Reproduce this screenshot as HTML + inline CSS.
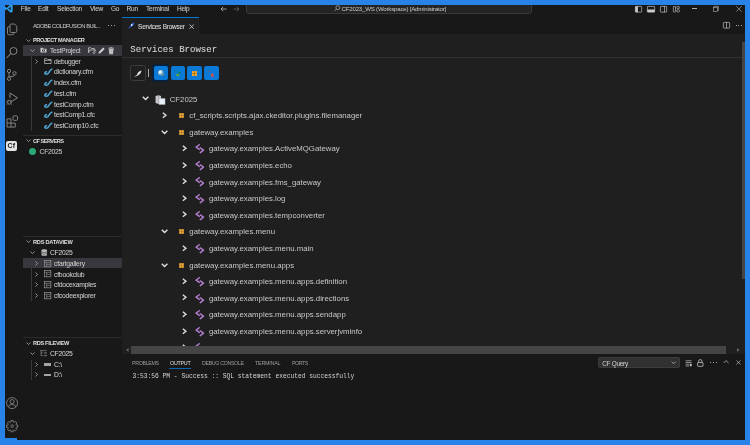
<!DOCTYPE html>
<html><head><meta charset="utf-8"><title>VS Code - Services Browser</title>
<style>
html,body{margin:0;padding:0;width:750px;height:445px;overflow:hidden;background:#2883e8;}
#w{position:absolute;left:0;top:0;width:750px;height:445px;overflow:hidden;will-change:transform;background:#181818;font-family:"Liberation Sans",sans-serif;}
.t{position:absolute;white-space:nowrap;-webkit-text-stroke:0.2px currentColor;}
.r{position:absolute;}
.s{position:absolute;overflow:visible;}
</style></head><body>
<div id="w">
<div class="r" style="left:0.00px;top:0.00px;width:750.00px;height:17.10px;background:#181818;"></div>
<div class="r" style="left:0.00px;top:16.60px;width:750.00px;height:0.50px;background:#2b2b2b;"></div>
<svg class="s" style="left:4.00px;top:4.00px;" width="9" height="9" viewBox="0 0 100 100"><path d="M74 4 L96 14 V86 L74 96 L30 56 L12 70 L4 66 V34 L12 30 L30 44 Z M74 28 L48 50 L74 72 Z" fill="#2aa2f0"/></svg>
<div class="t" style="left:20.80px;top:5.25px;font-size:6.527px;line-height:7.51px;color:#cccccc;letter-spacing:-0.172px;-webkit-text-stroke:0.05px currentColor;">File</div>
<div class="t" style="left:38.00px;top:5.25px;font-size:6.527px;line-height:7.51px;color:#cccccc;letter-spacing:-0.184px;-webkit-text-stroke:0.05px currentColor;">Edit</div>
<div class="t" style="left:57.00px;top:5.25px;font-size:6.527px;line-height:7.51px;color:#cccccc;letter-spacing:-0.195px;-webkit-text-stroke:0.05px currentColor;">Selection</div>
<div class="t" style="left:90.00px;top:5.25px;font-size:6.527px;line-height:7.51px;color:#cccccc;letter-spacing:-0.229px;-webkit-text-stroke:0.05px currentColor;">View</div>
<div class="t" style="left:111.00px;top:5.25px;font-size:6.527px;line-height:7.51px;color:#cccccc;letter-spacing:-0.285px;-webkit-text-stroke:0.05px currentColor;">Go</div>
<div class="t" style="left:126.60px;top:5.25px;font-size:6.527px;line-height:7.51px;color:#cccccc;letter-spacing:-0.261px;-webkit-text-stroke:0.05px currentColor;">Run</div>
<div class="t" style="left:146.00px;top:5.25px;font-size:6.527px;line-height:7.51px;color:#cccccc;letter-spacing:-0.202px;-webkit-text-stroke:0.05px currentColor;">Terminal</div>
<div class="t" style="left:177.00px;top:5.25px;font-size:6.527px;line-height:7.51px;color:#cccccc;letter-spacing:-0.220px;-webkit-text-stroke:0.05px currentColor;">Help</div>
<svg class="s" style="left:219.50px;top:5.50px;" width="7" height="6" viewBox="0 0 14 12"><path d="M13 6H2M6.5 1.5L2 6l4.5 4.5" stroke="#cccccc" stroke-width="1.4" fill="none"/></svg>
<svg class="s" style="left:232.50px;top:5.50px;" width="7" height="6" viewBox="0 0 14 12"><path d="M1 6h11M7.5 1.5L12 6l-4.5 4.5" stroke="#6f6f6f" stroke-width="1.4" fill="none"/></svg>
<div class="r" style="left:246.20px;top:3.20px;width:286.30px;height:10.80px;background:#242424;border:0.5px solid #3a3a3a;border-radius:3px;box-sizing:border-box;"></div>
<svg class="s" style="left:333.60px;top:5.20px;" width="6.5" height="6.5" viewBox="0 0 16 16"><circle cx="9.5" cy="6.5" r="4.8" stroke="#cccccc" stroke-width="1.5" fill="none"/><path d="M6 10L1.5 14.5" stroke="#cccccc" stroke-width="1.6"/></svg>
<div class="t" style="left:341.60px;top:5.40px;font-size:6.088px;line-height:7.00px;color:#cccccc;letter-spacing:-0.198px;-webkit-text-stroke:0px currentColor;">CF2023_WS (Workspace) [Administrator]</div>
<svg class="s" style="left:634.70px;top:5.70px;" width="7" height="6.5" viewBox="0 0 14 13"><rect x="0.75" y="0.75" width="12.5" height="11.5" rx="1" stroke="#cccccc" stroke-width="1.3" fill="none"/><rect x="0.75" y="0.75" width="5" height="11.5" fill="#cccccc"/></svg>
<svg class="s" style="left:646.70px;top:5.70px;" width="8" height="6.5" viewBox="0 0 16 13"><rect x="0.75" y="0.75" width="14.5" height="11.5" rx="1" stroke="#cccccc" stroke-width="1.3" fill="none"/><rect x="0.75" y="7" width="14.5" height="5.25" fill="#cccccc"/></svg>
<svg class="s" style="left:660.00px;top:5.70px;" width="7" height="6.5" viewBox="0 0 14 13"><rect x="0.75" y="0.75" width="12.5" height="11.5" rx="1" stroke="#cccccc" stroke-width="1.3" fill="none"/><path d="M9 1v11" stroke="#cccccc" stroke-width="1.3"/></svg>
<svg class="s" style="left:673.30px;top:5.70px;" width="6.7" height="6.5" viewBox="0 0 14 13"><rect x="0.75" y="0.75" width="4.5" height="11.5" rx="1" stroke="#cccccc" stroke-width="1.3" fill="none"/><rect x="8" y="0.75" width="5.25" height="4.5" rx="1" stroke="#cccccc" stroke-width="1.3" fill="none"/><rect x="8" y="7.75" width="5.25" height="4.5" rx="1" stroke="#cccccc" stroke-width="1.3" fill="none"/></svg>
<div class="r" style="left:692.00px;top:8.20px;width:5.20px;height:0.50px;background:#b0b0b0;"></div>
<svg class="s" style="left:713.30px;top:5.80px;" width="5.7" height="5.7" viewBox="0 0 12 12"><rect x="0.6" y="2.6" width="8.8" height="8.8" stroke="#cccccc" stroke-width="1.1" fill="none"/><path d="M2.6 2.6V0.6h8.8v8.8h-2" stroke="#cccccc" stroke-width="1.1" fill="none"/></svg>
<svg class="s" style="left:735.80px;top:5.60px;" width="5.9" height="5.9" viewBox="0 0 12 12"><path d="M0.5 0.5L11.5 11.5M11.5 0.5L0.5 11.5" stroke="#cccccc" stroke-width="1.1"/></svg>
<div class="r" style="left:0.00px;top:17.10px;width:23.40px;height:430.00px;background:#181818;"></div>
<div class="r" style="left:22.60px;top:17.10px;width:0.90px;height:430.00px;background:#262626;"></div>
<svg class="s" style="left:5.50px;top:22.50px;" width="12" height="12.5" viewBox="0 0 24 25"><path d="M8 4.5 Q8 2 10.5 2 H17 L21.5 6.5 V16.5 Q21.5 19 19 19 H10.5 Q8 19 8 16.5 Z" stroke="#8b8b8b" stroke-width="1.8" fill="none"/><path d="M8 7.5 H5.5 Q3 7.5 3 10 V21 Q3 23.5 5.5 23.5 H13 Q15.5 23.5 15.5 21 V19" stroke="#8b8b8b" stroke-width="1.8" fill="none"/></svg>
<svg class="s" style="left:5.50px;top:45.50px;" width="12.5" height="12.5" viewBox="0 0 25 25"><circle cx="15" cy="10" r="7" stroke="#8b8b8b" stroke-width="1.9" fill="none"/><path d="M10 15 L2 23" stroke="#8b8b8b" stroke-width="2.1" stroke-linecap="round"/></svg>
<svg class="s" style="left:6.00px;top:68.30px;" width="11.5" height="13.5" viewBox="0 0 23 27"><circle cx="6" cy="6" r="3.3" stroke="#8b8b8b" stroke-width="1.8" fill="none"/><circle cx="6" cy="21.5" r="3.3" stroke="#8b8b8b" stroke-width="1.8" fill="none"/><circle cx="17" cy="10.5" r="3.3" stroke="#8b8b8b" stroke-width="1.8" fill="none"/><path d="M6 9.3 V18.2 M17 13.8 Q17 17 12 17 Q6.5 17 6.5 18.5" stroke="#8b8b8b" stroke-width="1.8" fill="none"/></svg>
<svg class="s" style="left:5.50px;top:92.00px;" width="12.5" height="13.5" viewBox="0 0 25 27"><path d="M8 2 L23 11.5 L11 19" stroke="#8b8b8b" stroke-width="1.9" fill="none" stroke-linejoin="round"/><path d="M8 2 V12" stroke="#8b8b8b" stroke-width="1.9"/><ellipse cx="6.5" cy="20.5" rx="3.3" ry="4" stroke="#8b8b8b" stroke-width="1.8" fill="none"/><path d="M1 17.5h2M1 21h2M1 24.5h2M10 17.5h2M10 21h2M10 24.5h2" stroke="#8b8b8b" stroke-width="1.4"/></svg>
<svg class="s" style="left:5.50px;top:115.30px;" width="12.5" height="13.2" viewBox="0 0 25 26"><path d="M2 7.5 H10 V16 H18.5 V24 H2 Z M10 16 H2 M10 16 V24" stroke="#8b8b8b" stroke-width="1.8" fill="none" stroke-linejoin="round"/><rect x="14" y="1.5" width="9" height="9" rx="2" stroke="#8b8b8b" stroke-width="1.8" fill="none"/></svg>
<div class="r" style="left:6.10px;top:140.50px;width:11.10px;height:10.40px;background:#e4e4e4;border-radius:2px;"></div>
<div class="t" style="left:7.60px;top:141.88px;font-size:7.0px;line-height:8.05px;color:#1a1a1a;font-weight:bold;-webkit-text-stroke:0px currentColor;">Cf</div>
<svg class="s" style="left:5.80px;top:397.00px;" width="12.2" height="12.2" viewBox="0 0 24 24"><circle cx="12" cy="12" r="10.8" stroke="#8b8b8b" stroke-width="1.6" fill="none"/><circle cx="12" cy="9" r="4" stroke="#8b8b8b" stroke-width="1.6" fill="none"/><path d="M4.5 19.5 Q6 14.5 12 14.5 Q18 14.5 19.5 19.5" stroke="#8b8b8b" stroke-width="1.6" fill="none"/></svg>
<svg class="s" style="left:5.80px;top:420.20px;" width="12.3" height="12.3" viewBox="0 0 24 24"><path d="M9.61 3.95 L9.68 3.93 L9.86 1.01 L14.14 1.01 L14.32 3.93 L16.01 4.62 L16.07 4.65 L18.26 2.71 L21.29 5.74 L19.35 7.93 L20.05 9.61 L20.07 9.68 L22.99 9.86 L22.99 14.14 L20.07 14.32 L19.38 16.01 L19.35 16.07 L21.29 18.26 L18.26 21.29 L16.07 19.35 L14.39 20.05 L14.32 20.07 L14.14 22.99 L9.86 22.99 L9.68 20.07 L7.99 19.38 L7.93 19.35 L5.74 21.29 L2.71 18.26 L4.65 16.07 L3.95 14.39 L3.93 14.32 L1.01 14.14 L1.01 9.86 L3.93 9.68 L4.62 7.99 L4.65 7.93 L2.71 5.74 L5.74 2.71 L7.93 4.65Z" stroke="#8b8b8b" stroke-width="1.6" fill="none" stroke-linejoin="round"/><circle cx="12" cy="12" r="2.6" stroke="#8b8b8b" stroke-width="1.5" fill="none"/></svg>
<div class="r" style="left:23.40px;top:17.10px;width:98.60px;height:430.00px;background:#181818;"></div>
<div class="r" style="left:121.90px;top:17.10px;width:0.80px;height:430.00px;background:#2b2b2b;"></div>
<div class="t" style="left:33.00px;top:22.99px;font-size:5.75px;line-height:6.61px;color:#cccccc;letter-spacing:-0.463px;-webkit-text-stroke:0px currentColor;">ADOBE COLDFUSION BUIL...</div>
<div class="r" style="left:108.30px;top:24.90px;width:1.20px;height:1.20px;background:#cccccc;border-radius:50%;"></div>
<div class="r" style="left:110.90px;top:24.90px;width:1.20px;height:1.20px;background:#cccccc;border-radius:50%;"></div>
<div class="r" style="left:113.50px;top:24.90px;width:1.20px;height:1.20px;background:#cccccc;border-radius:50%;"></div>
<div class="r" style="left:23.40px;top:45.00px;width:98.60px;height:10.50px;background:#37373d;"></div>
<svg class="s" style="left:26.00px;top:38.50px;" width="5" height="3" viewBox="0 0 10 6"><path d="M1 1l4 4 4-4" stroke="#cccccc" stroke-width="1.3" fill="none"/></svg>
<div class="t" style="left:33.00px;top:37.28px;font-size:5.6px;line-height:6.44px;color:#d8d8d8;font-weight:bold;letter-spacing:-0.363px;-webkit-text-stroke:0.05px currentColor;">PROJECT MANAGER</div>
<svg class="s" style="left:30.00px;top:48.80px;" width="5" height="3" viewBox="0 0 10 6"><path d="M1 1l4 4 4-4" stroke="#cccccc" stroke-width="1.3" fill="none"/></svg>
<svg class="s" style="left:40.00px;top:46.80px;" width="7" height="6" viewBox="0 0 14 12"><path d="M1 2V11H13V3.5H7L5.5 1.5H1Z" fill="#cccccc"/><rect x="4" y="5" width="6" height="4" fill="#37373d"/><rect x="6" y="6" width="2" height="2" fill="#cccccc"/></svg>
<div class="t" style="left:50.00px;top:46.70px;font-size:6.602px;line-height:7.59px;color:#cccccc;letter-spacing:-0.194px;-webkit-text-stroke:0.05px currentColor;">TestProject</div>
<svg class="s" style="left:87.90px;top:47.20px;" width="8.1" height="7" viewBox="0 0 16 14"><path d="M1 11.5V1.5H5.5L7 3H12.5V6" stroke="#c8c8c8" stroke-width="1.6" fill="none"/><path d="M1 11.5L3.5 6H15L13 10" stroke="#c8c8c8" stroke-width="1.6" fill="none"/><circle cx="12" cy="11.5" r="1.8" stroke="#c8c8c8" stroke-width="1.2" fill="none"/></svg>
<svg class="s" style="left:97.80px;top:46.90px;" width="7.3" height="7.1" viewBox="0 0 14 14"><path d="M2.5 11.5L11.5 2.5" stroke="#d0d0d0" stroke-width="4" stroke-linecap="butt"/><path d="M0.5 13.5L1.2 10.5L3.5 12.8Z" fill="#d0d0d0"/></svg>
<svg class="s" style="left:108.00px;top:46.70px;" width="6.3" height="7.3" viewBox="0 0 12 14"><path d="M0.5 1.5H11.5V3H0.5Z M4 0.3H8V1.5H4Z" fill="#c8c8c8"/><path d="M1.3 3.5L2.4 13.7H9.6L10.7 3.5Z" fill="#bdbdbd"/></svg>
<div class="r" style="left:31.00px;top:56.00px;width:1.00px;height:74.80px;background:#393939;"></div>
<svg class="s" style="left:35.20px;top:58.80px;" width="3" height="5" viewBox="0 0 6 10"><path d="M1 1l4 4-4 4" stroke="#cccccc" stroke-width="1.3" fill="none"/></svg>
<svg class="s" style="left:43.60px;top:58.00px;" width="7.7" height="6" viewBox="0 0 15 12"><path d="M1 1.5H6L7.5 3H14V11H1Z" stroke="#cccccc" stroke-width="1.4" fill="none"/><path d="M1 5H14" stroke="#cccccc" stroke-width="1.2"/></svg>
<div class="t" style="left:54.00px;top:57.72px;font-size:6.741px;line-height:7.75px;color:#cccccc;letter-spacing:-0.233px;-webkit-text-stroke:0.05px currentColor;">debugger</div>
<svg class="s" style="left:42.00px;top:67.30px;" width="12" height="10" viewBox="0 0 12 10"><path d="M9.9 2.2 Q7.9 3.4 6.9 5.3 Q5.9 7.2 4.2 7.2 Q2.6 7.1 2.8 6 Q3.1 5.1 4.5 4.8" stroke="#4fa3cf" stroke-width="1.5" fill="none" stroke-linecap="round"/></svg>
<div class="t" style="left:54.00px;top:68.46px;font-size:6.848px;line-height:7.88px;color:#cccccc;letter-spacing:-0.195px;-webkit-text-stroke:0.05px currentColor;">dictionary.cfm</div>
<svg class="s" style="left:42.00px;top:78.00px;" width="12" height="10" viewBox="0 0 12 10"><path d="M9.9 2.2 Q7.9 3.4 6.9 5.3 Q5.9 7.2 4.2 7.2 Q2.6 7.1 2.8 6 Q3.1 5.1 4.5 4.8" stroke="#4fa3cf" stroke-width="1.5" fill="none" stroke-linecap="round"/></svg>
<div class="t" style="left:54.00px;top:79.16px;font-size:6.848px;line-height:7.88px;color:#cccccc;letter-spacing:-0.213px;-webkit-text-stroke:0.05px currentColor;">index.cfm</div>
<svg class="s" style="left:42.00px;top:88.70px;" width="12" height="10" viewBox="0 0 12 10"><path d="M9.9 2.2 Q7.9 3.4 6.9 5.3 Q5.9 7.2 4.2 7.2 Q2.6 7.1 2.8 6 Q3.1 5.1 4.5 4.8" stroke="#4fa3cf" stroke-width="1.5" fill="none" stroke-linecap="round"/></svg>
<div class="t" style="left:54.00px;top:89.86px;font-size:6.848px;line-height:7.88px;color:#cccccc;letter-spacing:-0.196px;-webkit-text-stroke:0.05px currentColor;">test.cfm</div>
<svg class="s" style="left:42.00px;top:99.50px;" width="12" height="10" viewBox="0 0 12 10"><path d="M9.9 2.2 Q7.9 3.4 6.9 5.3 Q5.9 7.2 4.2 7.2 Q2.6 7.1 2.8 6 Q3.1 5.1 4.5 4.8" stroke="#4fa3cf" stroke-width="1.5" fill="none" stroke-linecap="round"/></svg>
<div class="t" style="left:54.00px;top:100.66px;font-size:6.848px;line-height:7.88px;color:#cccccc;letter-spacing:-0.230px;-webkit-text-stroke:0.05px currentColor;">testComp.cfm</div>
<svg class="s" style="left:42.00px;top:110.20px;" width="12" height="10" viewBox="0 0 12 10"><path d="M9.9 2.2 Q7.9 3.4 6.9 5.3 Q5.9 7.2 4.2 7.2 Q2.6 7.1 2.8 6 Q3.1 5.1 4.5 4.8" stroke="#4fa3cf" stroke-width="1.5" fill="none" stroke-linecap="round"/></svg>
<div class="t" style="left:54.00px;top:111.36px;font-size:6.848px;line-height:7.88px;color:#cccccc;letter-spacing:-0.220px;-webkit-text-stroke:0.05px currentColor;">testComp1.cfc</div>
<svg class="s" style="left:42.00px;top:121.00px;" width="12" height="10" viewBox="0 0 12 10"><path d="M9.9 2.2 Q7.9 3.4 6.9 5.3 Q5.9 7.2 4.2 7.2 Q2.6 7.1 2.8 6 Q3.1 5.1 4.5 4.8" stroke="#4fa3cf" stroke-width="1.5" fill="none" stroke-linecap="round"/></svg>
<div class="t" style="left:54.00px;top:122.16px;font-size:6.848px;line-height:7.88px;color:#cccccc;letter-spacing:-0.222px;-webkit-text-stroke:0.05px currentColor;">testComp10.cfc</div>
<div class="r" style="left:23.40px;top:135.00px;width:98.60px;height:0.50px;background:#2b2b2b;"></div>
<svg class="s" style="left:26.00px;top:139.10px;" width="5" height="3" viewBox="0 0 10 6"><path d="M1 1l4 4 4-4" stroke="#cccccc" stroke-width="1.3" fill="none"/></svg>
<div class="t" style="left:33.00px;top:137.88px;font-size:5.6px;line-height:6.44px;color:#d8d8d8;font-weight:bold;letter-spacing:-0.519px;-webkit-text-stroke:0.05px currentColor;">CF SERVERS</div>
<div class="r" style="left:29px;top:147.6px;width:7.2px;height:7.2px;border-radius:50%;background:#2aa876;"></div>
<div class="t" style="left:39.60px;top:148.32px;font-size:6.741px;line-height:7.75px;color:#cccccc;letter-spacing:-0.261px;-webkit-text-stroke:0.05px currentColor;">CF2025</div>
<div class="r" style="left:23.40px;top:236.40px;width:98.60px;height:0.50px;background:#2b2b2b;"></div>
<svg class="s" style="left:26.00px;top:240.30px;" width="5" height="3" viewBox="0 0 10 6"><path d="M1 1l4 4 4-4" stroke="#cccccc" stroke-width="1.3" fill="none"/></svg>
<div class="t" style="left:33.00px;top:239.08px;font-size:5.6px;line-height:6.44px;color:#d8d8d8;font-weight:bold;letter-spacing:-0.208px;-webkit-text-stroke:0.05px currentColor;">RDS DATAVIEW</div>
<svg class="s" style="left:30.00px;top:250.90px;" width="5" height="3" viewBox="0 0 10 6"><path d="M1 1l4 4 4-4" stroke="#cccccc" stroke-width="1.3" fill="none"/></svg>
<svg class="s" style="left:40.50px;top:248.50px;" width="6.5" height="7.5" viewBox="0 0 12 14"><ellipse cx="6" cy="2.5" rx="5.2" ry="2" fill="#bdbdbd"/><path d="M0.8 2.5V11.5Q6 14 11.2 11.5V2.5" fill="#bdbdbd"/><path d="M0.8 5.5Q6 7.5 11.2 5.5M0.8 8.5Q6 10.5 11.2 8.5" stroke="#181818" stroke-width="0.9" fill="none"/></svg>
<div class="t" style="left:50.00px;top:248.52px;font-size:6.741px;line-height:7.75px;color:#cccccc;letter-spacing:-0.261px;-webkit-text-stroke:0.05px currentColor;">CF2025</div>
<div class="r" style="left:23.40px;top:258.30px;width:98.60px;height:10.20px;background:#37373d;"></div>
<div class="r" style="left:31.00px;top:258.50px;width:1.00px;height:42.50px;background:#393939;"></div>
<svg class="s" style="left:35.20px;top:260.80px;" width="3" height="5" viewBox="0 0 6 10"><path d="M1 1l4 4-4 4" stroke="#cccccc" stroke-width="1.3" fill="none"/></svg>
<svg class="s" style="left:43.80px;top:259.70px;" width="7.3" height="7.2" viewBox="0 0 14 14"><rect x="0.7" y="0.7" width="12.6" height="12.6" stroke="#9a9a9a" stroke-width="1.3" fill="none"/><path d="M0.7 4.5H13.3M5 4.5V13.3M5 8.5H13.3" stroke="#9a9a9a" stroke-width="1.1"/></svg>
<div class="t" style="left:54.00px;top:259.99px;font-size:6.795px;line-height:7.81px;color:#cccccc;letter-spacing:-0.181px;-webkit-text-stroke:0.05px currentColor;">cfartgallery</div>
<svg class="s" style="left:35.20px;top:271.50px;" width="3" height="5" viewBox="0 0 6 10"><path d="M1 1l4 4-4 4" stroke="#cccccc" stroke-width="1.3" fill="none"/></svg>
<svg class="s" style="left:43.80px;top:270.40px;" width="7.3" height="7.2" viewBox="0 0 14 14"><rect x="0.7" y="0.7" width="12.6" height="12.6" stroke="#9a9a9a" stroke-width="1.3" fill="none"/><path d="M0.7 4.5H13.3M5 4.5V13.3M5 8.5H13.3" stroke="#9a9a9a" stroke-width="1.1"/></svg>
<div class="t" style="left:54.00px;top:270.69px;font-size:6.795px;line-height:7.81px;color:#cccccc;letter-spacing:-0.213px;-webkit-text-stroke:0.05px currentColor;">cfbookclub</div>
<svg class="s" style="left:35.20px;top:282.20px;" width="3" height="5" viewBox="0 0 6 10"><path d="M1 1l4 4-4 4" stroke="#cccccc" stroke-width="1.3" fill="none"/></svg>
<svg class="s" style="left:43.80px;top:281.10px;" width="7.3" height="7.2" viewBox="0 0 14 14"><rect x="0.7" y="0.7" width="12.6" height="12.6" stroke="#9a9a9a" stroke-width="1.3" fill="none"/><path d="M0.7 4.5H13.3M5 4.5V13.3M5 8.5H13.3" stroke="#9a9a9a" stroke-width="1.1"/></svg>
<div class="t" style="left:54.00px;top:281.39px;font-size:6.795px;line-height:7.81px;color:#cccccc;letter-spacing:-0.228px;-webkit-text-stroke:0.05px currentColor;">cfdocexamples</div>
<svg class="s" style="left:35.20px;top:292.90px;" width="3" height="5" viewBox="0 0 6 10"><path d="M1 1l4 4-4 4" stroke="#cccccc" stroke-width="1.3" fill="none"/></svg>
<svg class="s" style="left:43.80px;top:291.80px;" width="7.3" height="7.2" viewBox="0 0 14 14"><rect x="0.7" y="0.7" width="12.6" height="12.6" stroke="#9a9a9a" stroke-width="1.3" fill="none"/><path d="M0.7 4.5H13.3M5 4.5V13.3M5 8.5H13.3" stroke="#9a9a9a" stroke-width="1.1"/></svg>
<div class="t" style="left:54.00px;top:292.09px;font-size:6.795px;line-height:7.81px;color:#cccccc;letter-spacing:-0.208px;-webkit-text-stroke:0.05px currentColor;">cfcodeexplorer</div>
<div class="r" style="left:23.40px;top:337.40px;width:98.60px;height:0.50px;background:#2b2b2b;"></div>
<svg class="s" style="left:26.00px;top:341.50px;" width="5" height="3" viewBox="0 0 10 6"><path d="M1 1l4 4 4-4" stroke="#cccccc" stroke-width="1.3" fill="none"/></svg>
<div class="t" style="left:33.00px;top:340.28px;font-size:5.6px;line-height:6.44px;color:#d8d8d8;font-weight:bold;letter-spacing:-0.319px;-webkit-text-stroke:0.05px currentColor;">RDS FILEVIEW</div>
<svg class="s" style="left:30.00px;top:352.10px;" width="5" height="3" viewBox="0 0 10 6"><path d="M1 1l4 4 4-4" stroke="#cccccc" stroke-width="1.3" fill="none"/></svg>
<svg class="s" style="left:40.20px;top:350.10px;" width="6.8" height="6.4" viewBox="0 0 13 12"><path d="M0.5 1H12.5M2 1V11M2 5.5H5M2 10.5H5M7 5.5H12.5M7 10.5H12.5M11.5 4V7M11.5 9V12" stroke="#a0a0a0" stroke-width="1.1" fill="none"/></svg>
<div class="t" style="left:50.00px;top:349.72px;font-size:6.741px;line-height:7.75px;color:#cccccc;letter-spacing:-0.261px;-webkit-text-stroke:0.05px currentColor;">CF2025</div>
<div class="r" style="left:31.00px;top:359.50px;width:1.00px;height:20.00px;background:#393939;"></div>
<svg class="s" style="left:35.20px;top:362.00px;" width="3" height="5" viewBox="0 0 6 10"><path d="M1 1l4 4-4 4" stroke="#cccccc" stroke-width="1.3" fill="none"/></svg>
<div class="r" style="left:43.80px;top:363.40px;width:7.50px;height:2.20px;background:#a4a4a4;"></div>
<div class="t" style="left:54.00px;top:360.62px;font-size:6.741px;line-height:7.75px;color:#cccccc;letter-spacing:-0.188px;-webkit-text-stroke:0.05px currentColor;">C:\</div>
<svg class="s" style="left:35.20px;top:372.40px;" width="3" height="5" viewBox="0 0 6 10"><path d="M1 1l4 4-4 4" stroke="#cccccc" stroke-width="1.3" fill="none"/></svg>
<div class="r" style="left:43.80px;top:373.80px;width:7.50px;height:2.20px;background:#a4a4a4;"></div>
<div class="t" style="left:54.00px;top:371.02px;font-size:6.741px;line-height:7.75px;color:#cccccc;letter-spacing:-0.188px;-webkit-text-stroke:0.05px currentColor;">D:\</div>
<div class="r" style="left:122.30px;top:17.10px;width:622.70px;height:17.10px;background:#181818;"></div>
<div class="r" style="left:122.30px;top:17.10px;width:76.30px;height:17.10px;background:#1f1f1f;"></div>
<div class="r" style="left:198.50px;top:33.50px;width:546.50px;height:1.00px;background:#272727;"></div>
<div class="r" style="left:198.10px;top:17.10px;width:1.00px;height:17.00px;background:#272727;"></div>
<div class="r" style="left:122.30px;top:16.60px;width:76.30px;height:1.20px;background:#0078d4;"></div>
<svg class="s" style="left:127.20px;top:21.80px;" width="8" height="7.2" viewBox="0 0 16 14"><path d="M0.5 13.5 C2.5 11.5 4.5 10 6.5 8.5 C7 5.5 9 2 15 0.5 C14.5 4 12.5 8 8.5 10 C6 11.5 3 13 0.5 13.5 Z" fill="#2a62d4"/><ellipse cx="9.5" cy="6" rx="1.8" ry="2" fill="#dfe8ff"/></svg>
<div class="t" style="left:138.10px;top:22.69px;font-size:6.45px;line-height:7.42px;color:#d8d8d8;letter-spacing:-0.211px;-webkit-text-stroke:0.1px currentColor;">Services Browser</div>
<svg class="s" style="left:188.80px;top:23.50px;" width="5.3" height="5.3" viewBox="0 0 10 10"><path d="M1 1L9 9M9 1L1 9" stroke="#dddddd" stroke-width="1.5"/></svg>
<svg class="s" style="left:722.60px;top:21.80px;" width="7" height="6.5" viewBox="0 0 14 13"><rect x="0.75" y="0.75" width="12.5" height="11.5" rx="1.5" stroke="#cccccc" stroke-width="1.3" fill="none"/><path d="M7 1v11" stroke="#cccccc" stroke-width="1.3"/></svg>
<div class="r" style="left:735.50px;top:24.60px;width:1.00px;height:1.00px;background:#cccccc;border-radius:50%;"></div>
<div class="r" style="left:738.10px;top:24.60px;width:1.00px;height:1.00px;background:#cccccc;border-radius:50%;"></div>
<div class="r" style="left:740.70px;top:24.60px;width:1.00px;height:1.00px;background:#cccccc;border-radius:50%;"></div>
<div class="r" style="left:122.30px;top:34.20px;width:622.70px;height:320.00px;background:#1f1f1f;"></div>
<div class="t" style="left:130.30px;top:44.55px;font-size:9.05px;line-height:10.41px;color:#d0d0d0;font-family:'Liberation Mono',monospace;-webkit-text-stroke:0.1px currentColor;">Services Browser</div>
<div class="r" style="left:122.30px;top:57.30px;width:620.00px;height:0.60px;background:#333333;"></div>
<div class="r" style="left:129.9px;top:65px;width:15.8px;height:15.8px;border:1px solid #3c3c3c;border-radius:2.5px;box-sizing:border-box;background:#1f1f1f;"></div>
<svg class="s" style="left:133.60px;top:69.60px;" width="8" height="7.4" viewBox="0 0 16 14"><path d="M0.5 13.5 C2.5 11.5 4.5 10 6.5 8.5 C7 5.5 9 2 15 0.5 C14.5 4 12.5 8 8.5 10 C6 11.5 3 13 0.5 13.5 Z" fill="#e6e6e6"/></svg>
<div class="r" style="left:147.90px;top:69.00px;width:1.10px;height:8.20px;background:#a8a8a8;"></div>
<div class="r" style="left:152.2px;top:64.3px;width:17.2px;height:17.6px;border-radius:3px;background:#07203c;"></div>
<div class="r" style="left:153.80px;top:65.90px;width:14.40px;height:14.30px;background:#0a7ad6;border-radius:2px;"></div>
<div class="r" style="left:170.90px;top:65.90px;width:14.40px;height:14.30px;background:#0a7ad6;border-radius:2px;"></div>
<div class="r" style="left:187.40px;top:65.90px;width:14.40px;height:14.30px;background:#0a7ad6;border-radius:2px;"></div>
<div class="r" style="left:204.20px;top:65.90px;width:14.40px;height:14.30px;background:#0a7ad6;border-radius:2px;"></div>
<svg class="s" style="left:157.90px;top:70.20px;" width="6.2" height="6.2" viewBox="0 0 12 12"><defs><radialGradient id="gl" cx="0.32" cy="0.3" r="0.75"><stop offset="0" stop-color="#ffffff"/><stop offset="0.3" stop-color="#dfe8e0"/><stop offset="0.6" stop-color="#62a8dc"/><stop offset="1" stop-color="#3a7cc0"/></radialGradient></defs><circle cx="6" cy="6" r="5.8" fill="url(#gl)"/><path d="M6 11.8 C8 11 9 9.5 8.5 8 C10 8 11 7 11.6 6.5 C11.5 9.5 9 11.8 6 11.8Z" fill="#a8a040"/></svg>
<svg class="s" style="left:173.80px;top:69.60px;" width="8" height="7.2" viewBox="0 0 16 14"><path d="M1 2.5h2.5M1 4.5h1.5M5 1v3" stroke="#0f8a6a" stroke-width="1.1"/><ellipse cx="7.5" cy="10" rx="3.3" ry="2.8" fill="#5aa848"/><path d="M8 6.5 C9 4 11 3.5 14 3 C13.5 6 12 7.5 9.5 8" fill="#108050"/></svg>
<svg class="s" style="left:191.80px;top:70.90px;" width="5" height="5.1" viewBox="0 0 10 10"><rect x="0" y="0" width="10" height="10" rx="1" fill="#f2a82a"/><path d="M5 0V10M0 5H10" stroke="#8a5a10" stroke-width="1"/></svg>
<svg class="s" style="left:207.60px;top:69.60px;" width="6.6" height="6.8" viewBox="0 0 13 13"><path d="M1 1.5v2.5M4 1v3" stroke="#b04848" stroke-width="1.1"/><path d="M7.5 6 L9.5 6 L12 12.5 H5 Z" fill="#f04a3a"/></svg>
<svg class="s" style="left:141.60px;top:96.20px;" width="7.2" height="4.8" viewBox="0 0 12 8"><path d="M1.3 1.3 L6 6 L10.7 1.3" stroke="#e0e0e0" stroke-width="2.3" fill="none"/></svg>
<svg class="s" style="left:155.20px;top:94.50px;" width="10.6" height="10" viewBox="0 0 21 20"><path d="M1 2 L7 0.5 L12 2 V16 L7 18 L1 16 Z" fill="#c8c8c8"/><path d="M7 0.5 V18" stroke="#8a8a8a" stroke-width="1"/><rect x="8" y="7" width="12" height="12" fill="#e8eef8"/><path d="M8 7 H20 V19 H8 Z" stroke="#b0b8c8" stroke-width="0.8" fill="none"/></svg>
<div class="t" style="left:169.70px;top:95.21px;font-size:7.81px;line-height:8.98px;color:#c8c8c8;-webkit-text-stroke:0px currentColor;">CF2025</div>
<svg class="s" style="left:161.80px;top:111.70px;" width="5.2" height="6.6" viewBox="0 0 8 10"><path d="M1.3 1.1 L6 5 L1.3 8.9" stroke="#e0e0e0" stroke-width="2.2" fill="none"/></svg>
<svg class="s" style="left:178.90px;top:113.10px;" width="5" height="5" viewBox="0 0 10 10"><rect x="0.3" y="0.3" width="9.4" height="9.4" fill="#eaa83a"/><path d="M5 0.3V9.7M0.3 5H9.7" stroke="#8a5e18" stroke-width="0.8"/></svg>
<div class="t" style="left:189.30px;top:112.11px;font-size:7.8px;line-height:8.97px;color:#c8c8c8;-webkit-text-stroke:0px currentColor;">cf_scripts.scripts.ajax.ckeditor.plugins.filemanager</div>
<svg class="s" style="left:161.00px;top:129.80px;" width="7.2" height="4.8" viewBox="0 0 12 8"><path d="M1.3 1.3 L6 6 L10.7 1.3" stroke="#e0e0e0" stroke-width="2.3" fill="none"/></svg>
<svg class="s" style="left:178.90px;top:129.70px;" width="5" height="5" viewBox="0 0 10 10"><rect x="0.3" y="0.3" width="9.4" height="9.4" fill="#eaa83a"/><path d="M5 0.3V9.7M0.3 5H9.7" stroke="#8a5e18" stroke-width="0.8"/></svg>
<div class="t" style="left:189.30px;top:128.71px;font-size:7.8px;line-height:8.97px;color:#c8c8c8;-webkit-text-stroke:0px currentColor;">gateway.examples</div>
<svg class="s" style="left:181.60px;top:144.90px;" width="5.2" height="6.6" viewBox="0 0 8 10"><path d="M1.3 1.1 L6 5 L1.3 8.9" stroke="#e0e0e0" stroke-width="2.2" fill="none"/></svg>
<svg class="s" style="left:194.60px;top:144.20px;" width="9.6" height="9.4" viewBox="0 0 19 19"><path d="M8.5 1.5 L2 6.5 L8.5 11" stroke="#b27ccc" stroke-width="3" fill="none" stroke-linejoin="round" stroke-linecap="round"/><path d="M10.5 8 L17 12.5 L10.5 17.5" stroke="#b27ccc" stroke-width="3" fill="none" stroke-linejoin="round" stroke-linecap="round"/></svg>
<div class="t" style="left:208.90px;top:145.31px;font-size:7.8px;line-height:8.97px;color:#c8c8c8;-webkit-text-stroke:0px currentColor;">gateway.examples.ActiveMQGateway</div>
<svg class="s" style="left:181.60px;top:161.50px;" width="5.2" height="6.6" viewBox="0 0 8 10"><path d="M1.3 1.1 L6 5 L1.3 8.9" stroke="#e0e0e0" stroke-width="2.2" fill="none"/></svg>
<svg class="s" style="left:194.60px;top:160.80px;" width="9.6" height="9.4" viewBox="0 0 19 19"><path d="M8.5 1.5 L2 6.5 L8.5 11" stroke="#b27ccc" stroke-width="3" fill="none" stroke-linejoin="round" stroke-linecap="round"/><path d="M10.5 8 L17 12.5 L10.5 17.5" stroke="#b27ccc" stroke-width="3" fill="none" stroke-linejoin="round" stroke-linecap="round"/></svg>
<div class="t" style="left:208.90px;top:161.92px;font-size:7.8px;line-height:8.97px;color:#c8c8c8;-webkit-text-stroke:0px currentColor;">gateway.examples.echo</div>
<svg class="s" style="left:181.60px;top:178.10px;" width="5.2" height="6.6" viewBox="0 0 8 10"><path d="M1.3 1.1 L6 5 L1.3 8.9" stroke="#e0e0e0" stroke-width="2.2" fill="none"/></svg>
<svg class="s" style="left:194.60px;top:177.40px;" width="9.6" height="9.4" viewBox="0 0 19 19"><path d="M8.5 1.5 L2 6.5 L8.5 11" stroke="#b27ccc" stroke-width="3" fill="none" stroke-linejoin="round" stroke-linecap="round"/><path d="M10.5 8 L17 12.5 L10.5 17.5" stroke="#b27ccc" stroke-width="3" fill="none" stroke-linejoin="round" stroke-linecap="round"/></svg>
<div class="t" style="left:208.90px;top:178.51px;font-size:7.8px;line-height:8.97px;color:#c8c8c8;-webkit-text-stroke:0px currentColor;">gateway.examples.fms_gateway</div>
<svg class="s" style="left:181.60px;top:194.70px;" width="5.2" height="6.6" viewBox="0 0 8 10"><path d="M1.3 1.1 L6 5 L1.3 8.9" stroke="#e0e0e0" stroke-width="2.2" fill="none"/></svg>
<svg class="s" style="left:194.60px;top:194.00px;" width="9.6" height="9.4" viewBox="0 0 19 19"><path d="M8.5 1.5 L2 6.5 L8.5 11" stroke="#b27ccc" stroke-width="3" fill="none" stroke-linejoin="round" stroke-linecap="round"/><path d="M10.5 8 L17 12.5 L10.5 17.5" stroke="#b27ccc" stroke-width="3" fill="none" stroke-linejoin="round" stroke-linecap="round"/></svg>
<div class="t" style="left:208.90px;top:195.12px;font-size:7.8px;line-height:8.97px;color:#c8c8c8;-webkit-text-stroke:0px currentColor;">gateway.examples.log</div>
<svg class="s" style="left:181.60px;top:211.30px;" width="5.2" height="6.6" viewBox="0 0 8 10"><path d="M1.3 1.1 L6 5 L1.3 8.9" stroke="#e0e0e0" stroke-width="2.2" fill="none"/></svg>
<svg class="s" style="left:194.60px;top:210.60px;" width="9.6" height="9.4" viewBox="0 0 19 19"><path d="M8.5 1.5 L2 6.5 L8.5 11" stroke="#b27ccc" stroke-width="3" fill="none" stroke-linejoin="round" stroke-linecap="round"/><path d="M10.5 8 L17 12.5 L10.5 17.5" stroke="#b27ccc" stroke-width="3" fill="none" stroke-linejoin="round" stroke-linecap="round"/></svg>
<div class="t" style="left:208.90px;top:211.71px;font-size:7.8px;line-height:8.97px;color:#c8c8c8;-webkit-text-stroke:0px currentColor;">gateway.examples.tempconverter</div>
<svg class="s" style="left:161.00px;top:229.40px;" width="7.2" height="4.8" viewBox="0 0 12 8"><path d="M1.3 1.3 L6 6 L10.7 1.3" stroke="#e0e0e0" stroke-width="2.3" fill="none"/></svg>
<svg class="s" style="left:178.90px;top:229.30px;" width="5" height="5" viewBox="0 0 10 10"><rect x="0.3" y="0.3" width="9.4" height="9.4" fill="#eaa83a"/><path d="M5 0.3V9.7M0.3 5H9.7" stroke="#8a5e18" stroke-width="0.8"/></svg>
<div class="t" style="left:189.30px;top:228.31px;font-size:7.8px;line-height:8.97px;color:#c8c8c8;-webkit-text-stroke:0px currentColor;">gateway.examples.menu</div>
<svg class="s" style="left:181.60px;top:244.50px;" width="5.2" height="6.6" viewBox="0 0 8 10"><path d="M1.3 1.1 L6 5 L1.3 8.9" stroke="#e0e0e0" stroke-width="2.2" fill="none"/></svg>
<svg class="s" style="left:194.60px;top:243.80px;" width="9.6" height="9.4" viewBox="0 0 19 19"><path d="M8.5 1.5 L2 6.5 L8.5 11" stroke="#b27ccc" stroke-width="3" fill="none" stroke-linejoin="round" stroke-linecap="round"/><path d="M10.5 8 L17 12.5 L10.5 17.5" stroke="#b27ccc" stroke-width="3" fill="none" stroke-linejoin="round" stroke-linecap="round"/></svg>
<div class="t" style="left:208.90px;top:244.92px;font-size:7.8px;line-height:8.97px;color:#c8c8c8;-webkit-text-stroke:0px currentColor;">gateway.examples.menu.main</div>
<svg class="s" style="left:161.00px;top:262.60px;" width="7.2" height="4.8" viewBox="0 0 12 8"><path d="M1.3 1.3 L6 6 L10.7 1.3" stroke="#e0e0e0" stroke-width="2.3" fill="none"/></svg>
<svg class="s" style="left:178.90px;top:262.50px;" width="5" height="5" viewBox="0 0 10 10"><rect x="0.3" y="0.3" width="9.4" height="9.4" fill="#eaa83a"/><path d="M5 0.3V9.7M0.3 5H9.7" stroke="#8a5e18" stroke-width="0.8"/></svg>
<div class="t" style="left:189.30px;top:261.51px;font-size:7.8px;line-height:8.97px;color:#c8c8c8;-webkit-text-stroke:0px currentColor;">gateway.examples.menu.apps</div>
<svg class="s" style="left:181.60px;top:277.70px;" width="5.2" height="6.6" viewBox="0 0 8 10"><path d="M1.3 1.1 L6 5 L1.3 8.9" stroke="#e0e0e0" stroke-width="2.2" fill="none"/></svg>
<svg class="s" style="left:194.60px;top:277.00px;" width="9.6" height="9.4" viewBox="0 0 19 19"><path d="M8.5 1.5 L2 6.5 L8.5 11" stroke="#b27ccc" stroke-width="3" fill="none" stroke-linejoin="round" stroke-linecap="round"/><path d="M10.5 8 L17 12.5 L10.5 17.5" stroke="#b27ccc" stroke-width="3" fill="none" stroke-linejoin="round" stroke-linecap="round"/></svg>
<div class="t" style="left:208.90px;top:278.12px;font-size:7.8px;line-height:8.97px;color:#c8c8c8;-webkit-text-stroke:0px currentColor;">gateway.examples.menu.apps.definition</div>
<svg class="s" style="left:181.60px;top:294.30px;" width="5.2" height="6.6" viewBox="0 0 8 10"><path d="M1.3 1.1 L6 5 L1.3 8.9" stroke="#e0e0e0" stroke-width="2.2" fill="none"/></svg>
<svg class="s" style="left:194.60px;top:293.60px;" width="9.6" height="9.4" viewBox="0 0 19 19"><path d="M8.5 1.5 L2 6.5 L8.5 11" stroke="#b27ccc" stroke-width="3" fill="none" stroke-linejoin="round" stroke-linecap="round"/><path d="M10.5 8 L17 12.5 L10.5 17.5" stroke="#b27ccc" stroke-width="3" fill="none" stroke-linejoin="round" stroke-linecap="round"/></svg>
<div class="t" style="left:208.90px;top:294.71px;font-size:7.8px;line-height:8.97px;color:#c8c8c8;-webkit-text-stroke:0px currentColor;">gateway.examples.menu.apps.directions</div>
<svg class="s" style="left:181.60px;top:310.90px;" width="5.2" height="6.6" viewBox="0 0 8 10"><path d="M1.3 1.1 L6 5 L1.3 8.9" stroke="#e0e0e0" stroke-width="2.2" fill="none"/></svg>
<svg class="s" style="left:194.60px;top:310.20px;" width="9.6" height="9.4" viewBox="0 0 19 19"><path d="M8.5 1.5 L2 6.5 L8.5 11" stroke="#b27ccc" stroke-width="3" fill="none" stroke-linejoin="round" stroke-linecap="round"/><path d="M10.5 8 L17 12.5 L10.5 17.5" stroke="#b27ccc" stroke-width="3" fill="none" stroke-linejoin="round" stroke-linecap="round"/></svg>
<div class="t" style="left:208.90px;top:311.31px;font-size:7.8px;line-height:8.97px;color:#c8c8c8;-webkit-text-stroke:0px currentColor;">gateway.examples.menu.apps.sendapp</div>
<svg class="s" style="left:181.60px;top:327.50px;" width="5.2" height="6.6" viewBox="0 0 8 10"><path d="M1.3 1.1 L6 5 L1.3 8.9" stroke="#e0e0e0" stroke-width="2.2" fill="none"/></svg>
<svg class="s" style="left:194.60px;top:326.80px;" width="9.6" height="9.4" viewBox="0 0 19 19"><path d="M8.5 1.5 L2 6.5 L8.5 11" stroke="#b27ccc" stroke-width="3" fill="none" stroke-linejoin="round" stroke-linecap="round"/><path d="M10.5 8 L17 12.5 L10.5 17.5" stroke="#b27ccc" stroke-width="3" fill="none" stroke-linejoin="round" stroke-linecap="round"/></svg>
<div class="t" style="left:208.90px;top:327.91px;font-size:7.8px;line-height:8.97px;color:#c8c8c8;-webkit-text-stroke:0px currentColor;">gateway.examples.menu.apps.serverjvminfo</div>
<svg class="s" style="left:181.60px;top:344.10px;" width="5.2" height="6.6" viewBox="0 0 8 10"><path d="M1.3 1.1 L6 5 L1.3 8.9" stroke="#e0e0e0" stroke-width="2.2" fill="none"/></svg>
<svg class="s" style="left:194.60px;top:343.40px;" width="9.6" height="9.4" viewBox="0 0 19 19"><path d="M8.5 1.5 L2 6.5 L8.5 11" stroke="#b27ccc" stroke-width="3" fill="none" stroke-linejoin="round" stroke-linecap="round"/><path d="M10.5 8 L17 12.5 L10.5 17.5" stroke="#b27ccc" stroke-width="3" fill="none" stroke-linejoin="round" stroke-linecap="round"/></svg>
<div class="t" style="left:208.90px;top:344.51px;font-size:7.8px;line-height:8.97px;color:#c8c8c8;-webkit-text-stroke:0px currentColor;">gateway.examples.menu.apps.something</div>
<div class="r" style="left:122.30px;top:345.70px;width:622.70px;height:8.10px;background:#1f1f1f;"></div>
<div class="r" style="left:130.70px;top:345.70px;width:595.50px;height:8.10px;background:#454545;"></div>
<svg class="s" style="left:125.80px;top:347.80px;" width="2.6" height="3.8" viewBox="0 0 4 6"><path d="M4 0L0 3L4 6Z" fill="#6a6a6a"/></svg>
<svg class="s" style="left:736.80px;top:347.80px;" width="2.6" height="3.8" viewBox="0 0 4 6"><path d="M0 0L4 3L0 6Z" fill="#6a6a6a"/></svg>
<div class="r" style="left:742.00px;top:42.00px;width:3.00px;height:237.00px;background:#454545;"></div>
<div class="r" style="left:122.30px;top:353.80px;width:622.70px;height:90.00px;background:#181818;"></div>
<div class="t" style="left:132.00px;top:360.45px;font-size:5.3px;line-height:6.09px;color:#9d9d9d;letter-spacing:-0.344px;-webkit-text-stroke:0px currentColor;">PROBLEMS</div>
<div class="t" style="left:170.00px;top:360.45px;font-size:5.3px;line-height:6.09px;color:#e0e0e0;letter-spacing:-0.231px;-webkit-text-stroke:0px currentColor;">OUTPUT</div>
<div class="t" style="left:202.00px;top:360.45px;font-size:5.3px;line-height:6.09px;color:#9d9d9d;letter-spacing:-0.349px;-webkit-text-stroke:0px currentColor;">DEBUG CONSOLE</div>
<div class="t" style="left:255.00px;top:360.45px;font-size:5.3px;line-height:6.09px;color:#9d9d9d;letter-spacing:-0.187px;-webkit-text-stroke:0px currentColor;">TERMINAL</div>
<div class="t" style="left:292.00px;top:360.45px;font-size:5.3px;line-height:6.09px;color:#9d9d9d;letter-spacing:-0.492px;-webkit-text-stroke:0px currentColor;">PORTS</div>
<div class="r" style="left:169.30px;top:367.50px;width:22.00px;height:1.20px;background:#0a64b0;"></div>
<div class="t" style="left:132.50px;top:372.79px;font-size:6.27px;line-height:7.21px;color:#d4d4d4;font-family:'Liberation Mono',monospace;-webkit-text-stroke:0px currentColor;">3:53:56 PM - Success :: SQL statement executed successfully</div>
<div class="r" style="left:598.2px;top:357.4px;width:81.9px;height:10.8px;background:#313131;border:0.5px solid #3c3c3c;border-radius:2px;box-sizing:border-box;"></div>
<div class="t" style="left:602.20px;top:359.62px;font-size:6.4px;line-height:7.36px;color:#cccccc;letter-spacing:-0.242px;-webkit-text-stroke:0.05px currentColor;">CF Query</div>
<svg class="s" style="left:671.00px;top:361.30px;" width="5.4" height="3.2" viewBox="0 0 10 6"><path d="M1 1l4 4 4-4" stroke="#cccccc" stroke-width="1.2" fill="none"/></svg>
<svg class="s" style="left:684.70px;top:359.50px;" width="7.2" height="6.5" viewBox="0 0 14 13"><path d="M1 1.5H13M1 5H13M1 8.5H8M1 12H8" stroke="#cccccc" stroke-width="1.3"/><rect x="9.5" y="7.5" width="3.5" height="5" fill="#cccccc"/></svg>
<svg class="s" style="left:697.40px;top:358.80px;" width="6.6" height="7.6" viewBox="0 0 12 14"><path d="M3 6.5V4Q3 1 6 1Q9 1 9 4V6.5" stroke="#cccccc" stroke-width="1.4" fill="none"/><rect x="1" y="6.5" width="10" height="7" rx="1" stroke="#cccccc" stroke-width="1.4" fill="none"/></svg>
<div class="r" style="left:710.40px;top:362.20px;width:1.00px;height:1.00px;background:#cccccc;border-radius:50%;"></div>
<div class="r" style="left:713.00px;top:362.20px;width:1.00px;height:1.00px;background:#cccccc;border-radius:50%;"></div>
<div class="r" style="left:715.60px;top:362.20px;width:1.00px;height:1.00px;background:#cccccc;border-radius:50%;"></div>
<svg class="s" style="left:723.00px;top:360.30px;" width="6.2" height="3.6" viewBox="0 0 10 6"><path d="M1 5l4-4 4 4" stroke="#cccccc" stroke-width="1.2" fill="none"/></svg>
<svg class="s" style="left:736.30px;top:359.70px;" width="5" height="5" viewBox="0 0 10 10"><path d="M1 1L9 9M9 1L1 9" stroke="#cccccc" stroke-width="1.3"/></svg>
</div>
<div class="r" style="left:4.5px;top:4.5px;width:741px;height:935.2px;border:0.8px solid #140e0a;box-sizing:border-box;display:none"></div>
<div class="r" style="left:0;top:0;width:750px;height:5px;background:#2883e8"></div>
<div class="r" style="left:0;top:0;width:5px;height:445px;background:#2883e8"></div>
<div class="r" style="left:745px;top:0;width:5px;height:445px;background:#2883e8"></div>
<div class="r" style="left:0;top:440.1px;width:750px;height:6px;background:#2883e8"></div>
<div class="r" style="left:0;top:438.3px;width:17px;height:3px;background:#2883e8"></div>
</body></html>
